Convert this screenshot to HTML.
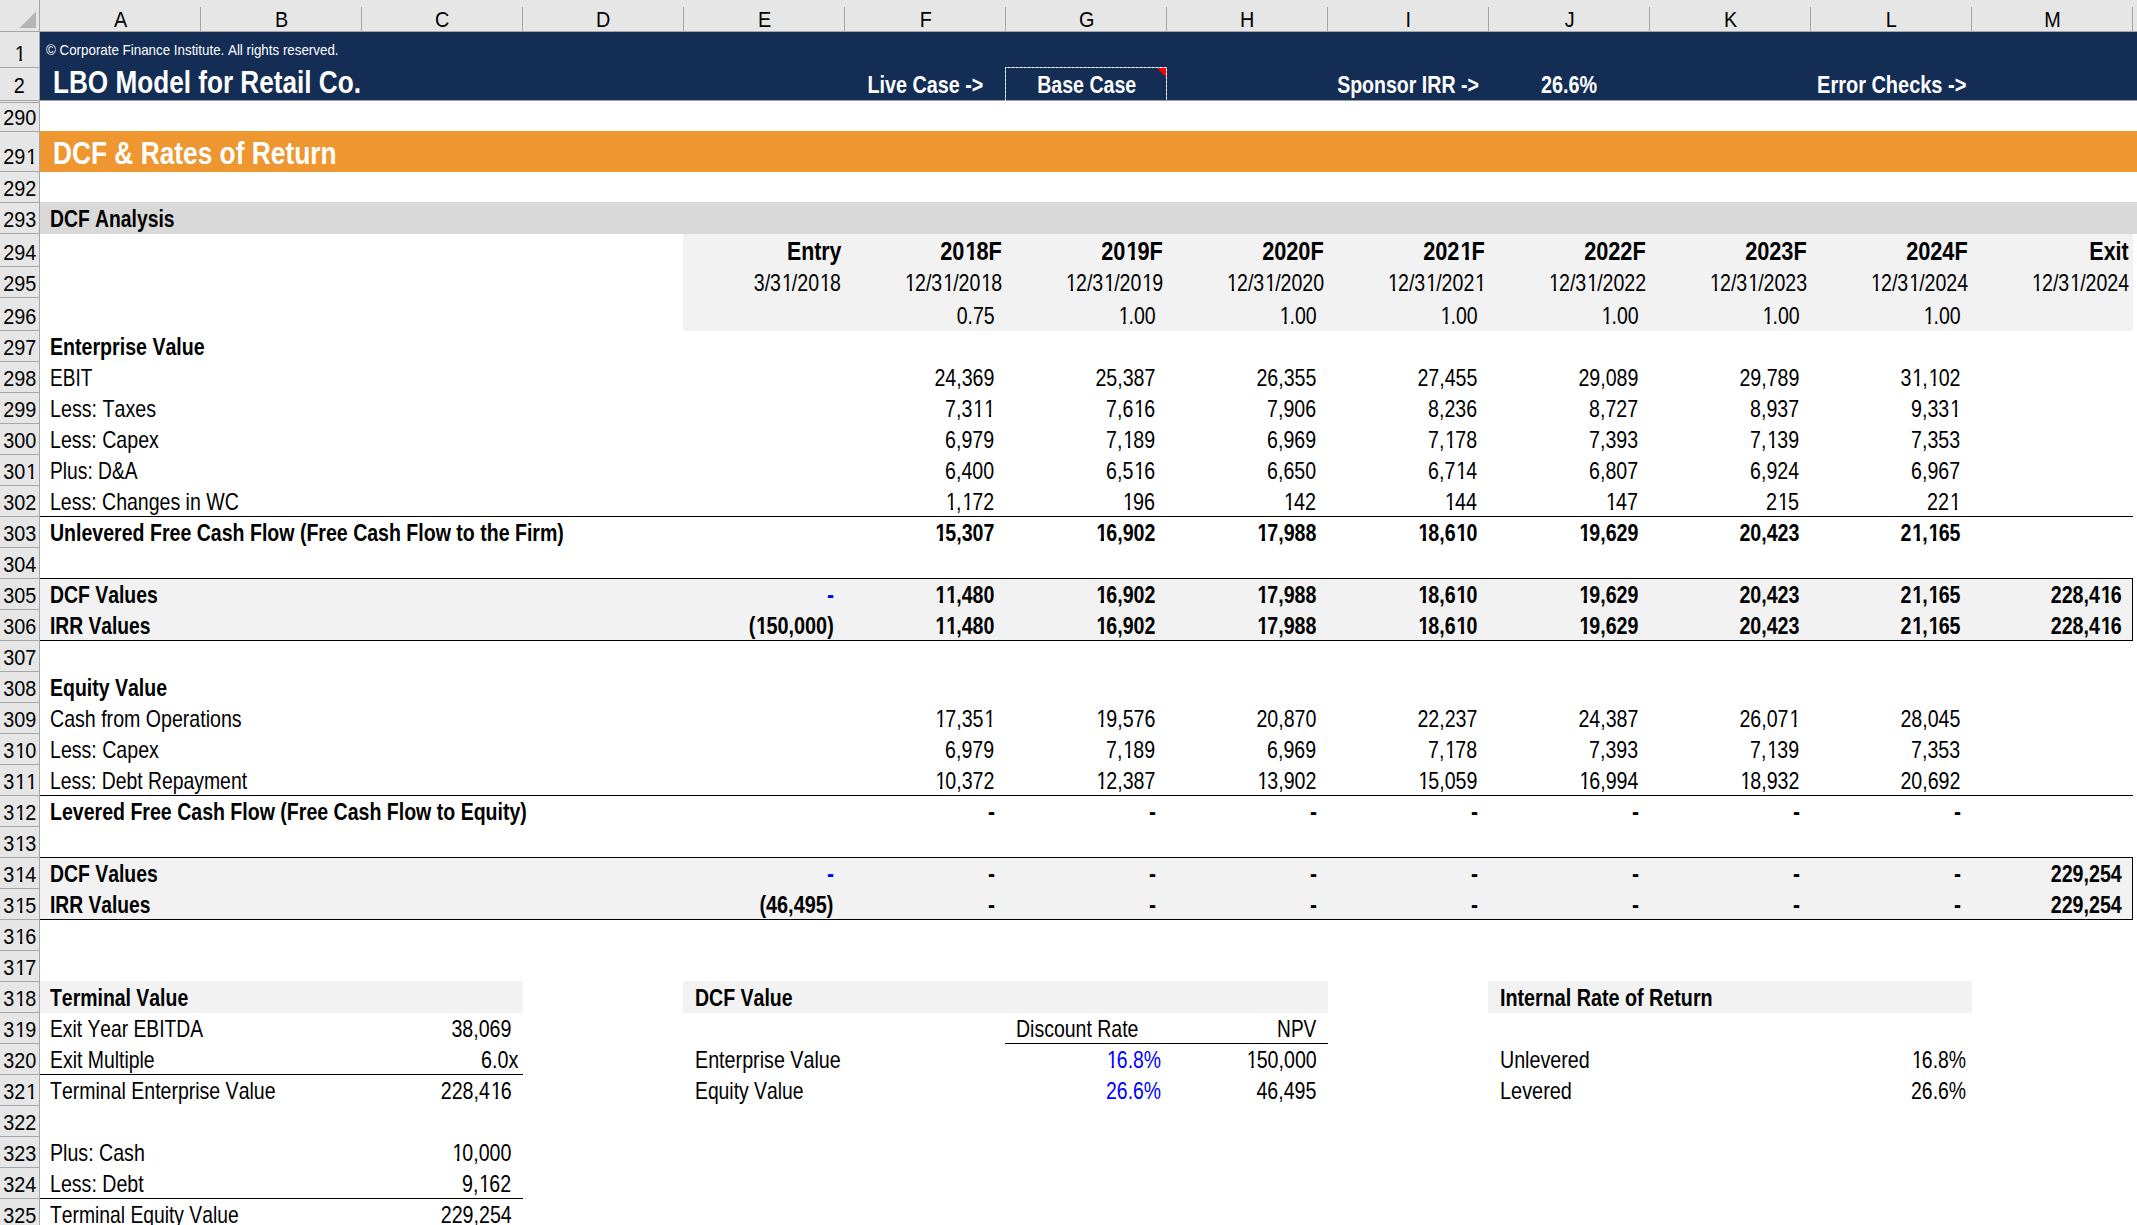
<!DOCTYPE html>
<html><head><meta charset="utf-8"><style>
html,body{margin:0;padding:0;background:#fff;}
body{width:2137px;height:1225px;position:relative;overflow:hidden;font-family:"Liberation Sans",sans-serif;font-kerning:none;font-feature-settings:"kern" 0,"liga" 0;text-rendering:optimizeSpeed;}
.r{position:absolute;}
.t{position:absolute;white-space:nowrap;}
.t span{display:inline-block;}
i{font-style:normal;display:inline-block;position:relative;left:0.05em;}
i.o{clip-path:polygon(0 0,100% 0,100% 0.68em,0.355em 0.68em,0.355em 2em,0.238em 2em,0.238em 0.68em,0 0.68em);}
i.ob{clip-path:polygon(0 0,100% 0,100% 0.65em,0.388em 0.65em,0.388em 2em,0.218em 2em,0.218em 0.65em,0 0.65em);}
</style></head><body>
<div class="r" style="left:40px;top:32px;width:2097px;height:68px;background:#132D55"></div>
<div class="r" style="left:40px;top:100px;width:2097px;height:1px;background:#A0A0A0"></div>
<div class="r" style="left:40px;top:131px;width:2097px;height:41px;background:#EE962F"></div>
<div class="r" style="left:40px;top:202px;width:2097px;height:32px;background:#D9D9D9"></div>
<div class="r" style="left:683px;top:234px;width:1450px;height:97px;background:#F2F2F2"></div>
<div class="r" style="left:40px;top:579px;width:2093px;height:62px;background:#F2F2F2"></div>
<div class="r" style="left:40px;top:858px;width:2093px;height:62px;background:#F2F2F2"></div>
<div class="r" style="left:40px;top:981px;width:483px;height:32px;background:#F2F2F2"></div>
<div class="r" style="left:683px;top:981px;width:645px;height:32px;background:#F2F2F2"></div>
<div class="r" style="left:1488px;top:981px;width:484px;height:32px;background:#F2F2F2"></div>
<div class="r" style="left:40px;top:516px;width:2093px;height:1px;background:#000"></div>
<div class="r" style="left:40px;top:578px;width:2093px;height:1px;background:#000"></div>
<div class="r" style="left:40px;top:640px;width:2093px;height:1px;background:#000"></div>
<div class="r" style="left:2132px;top:578px;width:1px;height:63px;background:#000"></div>
<div class="r" style="left:40px;top:795px;width:2093px;height:1px;background:#000"></div>
<div class="r" style="left:40px;top:857px;width:2093px;height:1px;background:#000"></div>
<div class="r" style="left:40px;top:919px;width:2093px;height:1px;background:#000"></div>
<div class="r" style="left:2132px;top:857px;width:1px;height:63px;background:#000"></div>
<div class="r" style="left:1005px;top:1043px;width:323px;height:1px;background:#000"></div>
<div class="r" style="left:40px;top:1074px;width:483px;height:1px;background:#000"></div>
<div class="r" style="left:40px;top:1198px;width:483px;height:1px;background:#000"></div>
<div class="r" style="left:0px;top:0px;width:2137px;height:31px;background:#E6E6E6"></div>
<div class="r" style="left:0px;top:31px;width:39px;height:1194px;background:#E6E6E6"></div>
<div class="r" style="left:0px;top:31px;width:2137px;height:1px;background:#A6A6A6"></div>
<div class="r" style="left:39px;top:0px;width:1px;height:1225px;background:#A6A6A6"></div>
<svg class="r" style="left:0;top:0" width="40" height="31"><polygon points="36,11.5 36,28 19.5,28" fill="#B4B4B4"/></svg>
<div class="r" style="left:200px;top:7px;width:1px;height:24px;background:#A6A6A6"></div>
<div class="t" style="left:-479.50px;top:8.55px;width:1200px;text-align:center;font-size:22.5px;line-height:22.5px;font-weight:normal;color:#000"><span style="transform:scaleX(0.88);transform-origin:center">A</span></div>
<div class="r" style="left:361px;top:7px;width:1px;height:24px;background:#A6A6A6"></div>
<div class="t" style="left:-318.50px;top:8.55px;width:1200px;text-align:center;font-size:22.5px;line-height:22.5px;font-weight:normal;color:#000"><span style="transform:scaleX(0.88);transform-origin:center">B</span></div>
<div class="r" style="left:522px;top:7px;width:1px;height:24px;background:#A6A6A6"></div>
<div class="t" style="left:-157.50px;top:8.55px;width:1200px;text-align:center;font-size:22.5px;line-height:22.5px;font-weight:normal;color:#000"><span style="transform:scaleX(0.88);transform-origin:center">C</span></div>
<div class="r" style="left:683px;top:7px;width:1px;height:24px;background:#A6A6A6"></div>
<div class="t" style="left:3.50px;top:8.55px;width:1200px;text-align:center;font-size:22.5px;line-height:22.5px;font-weight:normal;color:#000"><span style="transform:scaleX(0.88);transform-origin:center">D</span></div>
<div class="r" style="left:844px;top:7px;width:1px;height:24px;background:#A6A6A6"></div>
<div class="t" style="left:164.50px;top:8.55px;width:1200px;text-align:center;font-size:22.5px;line-height:22.5px;font-weight:normal;color:#000"><span style="transform:scaleX(0.88);transform-origin:center">E</span></div>
<div class="r" style="left:1005px;top:7px;width:1px;height:24px;background:#A6A6A6"></div>
<div class="t" style="left:325.50px;top:8.55px;width:1200px;text-align:center;font-size:22.5px;line-height:22.5px;font-weight:normal;color:#000"><span style="transform:scaleX(0.88);transform-origin:center">F</span></div>
<div class="r" style="left:1166px;top:7px;width:1px;height:24px;background:#A6A6A6"></div>
<div class="t" style="left:486.50px;top:8.55px;width:1200px;text-align:center;font-size:22.5px;line-height:22.5px;font-weight:normal;color:#000"><span style="transform:scaleX(0.88);transform-origin:center">G</span></div>
<div class="r" style="left:1327px;top:7px;width:1px;height:24px;background:#A6A6A6"></div>
<div class="t" style="left:647.50px;top:8.55px;width:1200px;text-align:center;font-size:22.5px;line-height:22.5px;font-weight:normal;color:#000"><span style="transform:scaleX(0.88);transform-origin:center">H</span></div>
<div class="r" style="left:1488px;top:7px;width:1px;height:24px;background:#A6A6A6"></div>
<div class="t" style="left:808.50px;top:8.55px;width:1200px;text-align:center;font-size:22.5px;line-height:22.5px;font-weight:normal;color:#000"><span style="transform:scaleX(0.88);transform-origin:center">I</span></div>
<div class="r" style="left:1649px;top:7px;width:1px;height:24px;background:#A6A6A6"></div>
<div class="t" style="left:969.50px;top:8.55px;width:1200px;text-align:center;font-size:22.5px;line-height:22.5px;font-weight:normal;color:#000"><span style="transform:scaleX(0.88);transform-origin:center">J</span></div>
<div class="r" style="left:1810px;top:7px;width:1px;height:24px;background:#A6A6A6"></div>
<div class="t" style="left:1130.50px;top:8.55px;width:1200px;text-align:center;font-size:22.5px;line-height:22.5px;font-weight:normal;color:#000"><span style="transform:scaleX(0.88);transform-origin:center">K</span></div>
<div class="r" style="left:1971px;top:7px;width:1px;height:24px;background:#A6A6A6"></div>
<div class="t" style="left:1291.50px;top:8.55px;width:1200px;text-align:center;font-size:22.5px;line-height:22.5px;font-weight:normal;color:#000"><span style="transform:scaleX(0.88);transform-origin:center">L</span></div>
<div class="r" style="left:2132px;top:7px;width:1px;height:24px;background:#A6A6A6"></div>
<div class="t" style="left:1452.50px;top:8.55px;width:1200px;text-align:center;font-size:22.5px;line-height:22.5px;font-weight:normal;color:#000"><span style="transform:scaleX(0.88);transform-origin:center">M</span></div>
<div class="r" style="left:0px;top:67px;width:39px;height:1px;background:#A6A6A6"></div>
<div class="t" style="left:-580.70px;top:42.95px;width:1200px;text-align:center;font-size:22.5px;line-height:22.5px;font-weight:normal;color:#000"><span style="transform:scaleX(0.88);transform-origin:center"><i class="o">1</i></span></div>
<div class="r" style="left:0px;top:100px;width:39px;height:1px;background:#A6A6A6"></div>
<div class="t" style="left:-580.70px;top:74.95px;width:1200px;text-align:center;font-size:22.5px;line-height:22.5px;font-weight:normal;color:#000"><span style="transform:scaleX(0.88);transform-origin:center">2</span></div>
<div class="r" style="left:0px;top:131px;width:39px;height:1px;background:#A6A6A6"></div>
<div class="t" style="left:-580.70px;top:106.95px;width:1200px;text-align:center;font-size:22.5px;line-height:22.5px;font-weight:normal;color:#000"><span style="transform:scaleX(0.88);transform-origin:center">290</span></div>
<div class="r" style="left:0px;top:171px;width:39px;height:1px;background:#A6A6A6"></div>
<div class="t" style="left:-580.70px;top:145.95px;width:1200px;text-align:center;font-size:22.5px;line-height:22.5px;font-weight:normal;color:#000"><span style="transform:scaleX(0.88);transform-origin:center">29<i class="o">1</i></span></div>
<div class="r" style="left:0px;top:202px;width:39px;height:1px;background:#A6A6A6"></div>
<div class="t" style="left:-580.70px;top:177.95px;width:1200px;text-align:center;font-size:22.5px;line-height:22.5px;font-weight:normal;color:#000"><span style="transform:scaleX(0.88);transform-origin:center">292</span></div>
<div class="r" style="left:0px;top:233px;width:39px;height:1px;background:#A6A6A6"></div>
<div class="t" style="left:-580.70px;top:208.95px;width:1200px;text-align:center;font-size:22.5px;line-height:22.5px;font-weight:normal;color:#000"><span style="transform:scaleX(0.88);transform-origin:center">293</span></div>
<div class="r" style="left:0px;top:266px;width:39px;height:1px;background:#A6A6A6"></div>
<div class="t" style="left:-580.70px;top:241.95px;width:1200px;text-align:center;font-size:22.5px;line-height:22.5px;font-weight:normal;color:#000"><span style="transform:scaleX(0.88);transform-origin:center">294</span></div>
<div class="r" style="left:0px;top:297px;width:39px;height:1px;background:#A6A6A6"></div>
<div class="t" style="left:-580.70px;top:272.95px;width:1200px;text-align:center;font-size:22.5px;line-height:22.5px;font-weight:normal;color:#000"><span style="transform:scaleX(0.88);transform-origin:center">295</span></div>
<div class="r" style="left:0px;top:330px;width:39px;height:1px;background:#A6A6A6"></div>
<div class="t" style="left:-580.70px;top:305.95px;width:1200px;text-align:center;font-size:22.5px;line-height:22.5px;font-weight:normal;color:#000"><span style="transform:scaleX(0.88);transform-origin:center">296</span></div>
<div class="r" style="left:0px;top:361px;width:39px;height:1px;background:#A6A6A6"></div>
<div class="t" style="left:-580.70px;top:336.95px;width:1200px;text-align:center;font-size:22.5px;line-height:22.5px;font-weight:normal;color:#000"><span style="transform:scaleX(0.88);transform-origin:center">297</span></div>
<div class="r" style="left:0px;top:392px;width:39px;height:1px;background:#A6A6A6"></div>
<div class="t" style="left:-580.70px;top:367.95px;width:1200px;text-align:center;font-size:22.5px;line-height:22.5px;font-weight:normal;color:#000"><span style="transform:scaleX(0.88);transform-origin:center">298</span></div>
<div class="r" style="left:0px;top:423px;width:39px;height:1px;background:#A6A6A6"></div>
<div class="t" style="left:-580.70px;top:398.95px;width:1200px;text-align:center;font-size:22.5px;line-height:22.5px;font-weight:normal;color:#000"><span style="transform:scaleX(0.88);transform-origin:center">299</span></div>
<div class="r" style="left:0px;top:454px;width:39px;height:1px;background:#A6A6A6"></div>
<div class="t" style="left:-580.70px;top:429.95px;width:1200px;text-align:center;font-size:22.5px;line-height:22.5px;font-weight:normal;color:#000"><span style="transform:scaleX(0.88);transform-origin:center">300</span></div>
<div class="r" style="left:0px;top:485px;width:39px;height:1px;background:#A6A6A6"></div>
<div class="t" style="left:-580.70px;top:460.95px;width:1200px;text-align:center;font-size:22.5px;line-height:22.5px;font-weight:normal;color:#000"><span style="transform:scaleX(0.88);transform-origin:center">30<i class="o">1</i></span></div>
<div class="r" style="left:0px;top:516px;width:39px;height:1px;background:#A6A6A6"></div>
<div class="t" style="left:-580.70px;top:491.95px;width:1200px;text-align:center;font-size:22.5px;line-height:22.5px;font-weight:normal;color:#000"><span style="transform:scaleX(0.88);transform-origin:center">302</span></div>
<div class="r" style="left:0px;top:547px;width:39px;height:1px;background:#A6A6A6"></div>
<div class="t" style="left:-580.70px;top:522.95px;width:1200px;text-align:center;font-size:22.5px;line-height:22.5px;font-weight:normal;color:#000"><span style="transform:scaleX(0.88);transform-origin:center">303</span></div>
<div class="r" style="left:0px;top:578px;width:39px;height:1px;background:#A6A6A6"></div>
<div class="t" style="left:-580.70px;top:553.95px;width:1200px;text-align:center;font-size:22.5px;line-height:22.5px;font-weight:normal;color:#000"><span style="transform:scaleX(0.88);transform-origin:center">304</span></div>
<div class="r" style="left:0px;top:609px;width:39px;height:1px;background:#A6A6A6"></div>
<div class="t" style="left:-580.70px;top:584.95px;width:1200px;text-align:center;font-size:22.5px;line-height:22.5px;font-weight:normal;color:#000"><span style="transform:scaleX(0.88);transform-origin:center">305</span></div>
<div class="r" style="left:0px;top:640px;width:39px;height:1px;background:#A6A6A6"></div>
<div class="t" style="left:-580.70px;top:615.95px;width:1200px;text-align:center;font-size:22.5px;line-height:22.5px;font-weight:normal;color:#000"><span style="transform:scaleX(0.88);transform-origin:center">306</span></div>
<div class="r" style="left:0px;top:671px;width:39px;height:1px;background:#A6A6A6"></div>
<div class="t" style="left:-580.70px;top:646.95px;width:1200px;text-align:center;font-size:22.5px;line-height:22.5px;font-weight:normal;color:#000"><span style="transform:scaleX(0.88);transform-origin:center">307</span></div>
<div class="r" style="left:0px;top:702px;width:39px;height:1px;background:#A6A6A6"></div>
<div class="t" style="left:-580.70px;top:677.95px;width:1200px;text-align:center;font-size:22.5px;line-height:22.5px;font-weight:normal;color:#000"><span style="transform:scaleX(0.88);transform-origin:center">308</span></div>
<div class="r" style="left:0px;top:733px;width:39px;height:1px;background:#A6A6A6"></div>
<div class="t" style="left:-580.70px;top:708.95px;width:1200px;text-align:center;font-size:22.5px;line-height:22.5px;font-weight:normal;color:#000"><span style="transform:scaleX(0.88);transform-origin:center">309</span></div>
<div class="r" style="left:0px;top:764px;width:39px;height:1px;background:#A6A6A6"></div>
<div class="t" style="left:-580.70px;top:739.95px;width:1200px;text-align:center;font-size:22.5px;line-height:22.5px;font-weight:normal;color:#000"><span style="transform:scaleX(0.88);transform-origin:center">3<i class="o">1</i>0</span></div>
<div class="r" style="left:0px;top:795px;width:39px;height:1px;background:#A6A6A6"></div>
<div class="t" style="left:-580.70px;top:770.95px;width:1200px;text-align:center;font-size:22.5px;line-height:22.5px;font-weight:normal;color:#000"><span style="transform:scaleX(0.88);transform-origin:center">3<i class="o">1</i><i class="o">1</i></span></div>
<div class="r" style="left:0px;top:826px;width:39px;height:1px;background:#A6A6A6"></div>
<div class="t" style="left:-580.70px;top:801.95px;width:1200px;text-align:center;font-size:22.5px;line-height:22.5px;font-weight:normal;color:#000"><span style="transform:scaleX(0.88);transform-origin:center">3<i class="o">1</i>2</span></div>
<div class="r" style="left:0px;top:857px;width:39px;height:1px;background:#A6A6A6"></div>
<div class="t" style="left:-580.70px;top:832.95px;width:1200px;text-align:center;font-size:22.5px;line-height:22.5px;font-weight:normal;color:#000"><span style="transform:scaleX(0.88);transform-origin:center">3<i class="o">1</i>3</span></div>
<div class="r" style="left:0px;top:888px;width:39px;height:1px;background:#A6A6A6"></div>
<div class="t" style="left:-580.70px;top:863.95px;width:1200px;text-align:center;font-size:22.5px;line-height:22.5px;font-weight:normal;color:#000"><span style="transform:scaleX(0.88);transform-origin:center">3<i class="o">1</i>4</span></div>
<div class="r" style="left:0px;top:919px;width:39px;height:1px;background:#A6A6A6"></div>
<div class="t" style="left:-580.70px;top:894.95px;width:1200px;text-align:center;font-size:22.5px;line-height:22.5px;font-weight:normal;color:#000"><span style="transform:scaleX(0.88);transform-origin:center">3<i class="o">1</i>5</span></div>
<div class="r" style="left:0px;top:950px;width:39px;height:1px;background:#A6A6A6"></div>
<div class="t" style="left:-580.70px;top:925.95px;width:1200px;text-align:center;font-size:22.5px;line-height:22.5px;font-weight:normal;color:#000"><span style="transform:scaleX(0.88);transform-origin:center">3<i class="o">1</i>6</span></div>
<div class="r" style="left:0px;top:981px;width:39px;height:1px;background:#A6A6A6"></div>
<div class="t" style="left:-580.70px;top:956.95px;width:1200px;text-align:center;font-size:22.5px;line-height:22.5px;font-weight:normal;color:#000"><span style="transform:scaleX(0.88);transform-origin:center">3<i class="o">1</i>7</span></div>
<div class="r" style="left:0px;top:1012px;width:39px;height:1px;background:#A6A6A6"></div>
<div class="t" style="left:-580.70px;top:987.95px;width:1200px;text-align:center;font-size:22.5px;line-height:22.5px;font-weight:normal;color:#000"><span style="transform:scaleX(0.88);transform-origin:center">3<i class="o">1</i>8</span></div>
<div class="r" style="left:0px;top:1043px;width:39px;height:1px;background:#A6A6A6"></div>
<div class="t" style="left:-580.70px;top:1018.95px;width:1200px;text-align:center;font-size:22.5px;line-height:22.5px;font-weight:normal;color:#000"><span style="transform:scaleX(0.88);transform-origin:center">3<i class="o">1</i>9</span></div>
<div class="r" style="left:0px;top:1074px;width:39px;height:1px;background:#A6A6A6"></div>
<div class="t" style="left:-580.70px;top:1049.95px;width:1200px;text-align:center;font-size:22.5px;line-height:22.5px;font-weight:normal;color:#000"><span style="transform:scaleX(0.88);transform-origin:center">320</span></div>
<div class="r" style="left:0px;top:1105px;width:39px;height:1px;background:#A6A6A6"></div>
<div class="t" style="left:-580.70px;top:1080.95px;width:1200px;text-align:center;font-size:22.5px;line-height:22.5px;font-weight:normal;color:#000"><span style="transform:scaleX(0.88);transform-origin:center">32<i class="o">1</i></span></div>
<div class="r" style="left:0px;top:1136px;width:39px;height:1px;background:#A6A6A6"></div>
<div class="t" style="left:-580.70px;top:1111.95px;width:1200px;text-align:center;font-size:22.5px;line-height:22.5px;font-weight:normal;color:#000"><span style="transform:scaleX(0.88);transform-origin:center">322</span></div>
<div class="r" style="left:0px;top:1167px;width:39px;height:1px;background:#A6A6A6"></div>
<div class="t" style="left:-580.70px;top:1142.95px;width:1200px;text-align:center;font-size:22.5px;line-height:22.5px;font-weight:normal;color:#000"><span style="transform:scaleX(0.88);transform-origin:center">323</span></div>
<div class="r" style="left:0px;top:1198px;width:39px;height:1px;background:#A6A6A6"></div>
<div class="t" style="left:-580.70px;top:1173.95px;width:1200px;text-align:center;font-size:22.5px;line-height:22.5px;font-weight:normal;color:#000"><span style="transform:scaleX(0.88);transform-origin:center">324</span></div>
<div class="r" style="left:0px;top:1229px;width:39px;height:1px;background:#A6A6A6"></div>
<div class="t" style="left:-580.70px;top:1204.95px;width:1200px;text-align:center;font-size:22.5px;line-height:22.5px;font-weight:normal;color:#000"><span style="transform:scaleX(0.88);transform-origin:center">325</span></div>
<div class="r" style="left:0px;top:102px;width:39px;height:1px;background:#A6A6A6"></div>
<div class="t" style="left:45.50px;top:41.90px;width:1200px;text-align:left;font-size:15px;line-height:15px;font-weight:normal;color:#fff"><span style="transform:scaleX(0.89);transform-origin:left">© Corporate Finance Institute. All rights reserved.</span></div>
<div class="t" style="left:53.00px;top:66.21px;width:1200px;text-align:left;font-size:32px;line-height:32px;font-weight:bold;color:#fff"><span style="transform:scaleX(0.817);transform-origin:left">LBO Model for Retail Co.</span></div>
<div class="t" style="left:325.50px;top:73.18px;width:1200px;text-align:center;font-size:24px;line-height:24px;font-weight:bold;color:#fff"><span style="transform:scaleX(0.8222109132032797);transform-origin:center">Live Case -&gt;</span></div>
<div class="t" style="left:486.50px;top:73.18px;width:1200px;text-align:center;font-size:24px;line-height:24px;font-weight:bold;color:#fff"><span style="transform:scaleX(0.8160199592935461);transform-origin:center">Base Case</span></div>
<div class="t" style="left:808.50px;top:73.18px;width:1200px;text-align:center;font-size:24px;line-height:24px;font-weight:bold;color:#fff"><span style="transform:scaleX(0.8146324879309172);transform-origin:center">Sponsor IRR -&gt;</span></div>
<div class="t" style="left:969.50px;top:73.18px;width:1200px;text-align:center;font-size:24px;line-height:24px;font-weight:bold;color:#fff"><span style="transform:scaleX(0.8244984160506864);transform-origin:center">26.6%</span></div>
<div class="t" style="left:1291.50px;top:73.18px;width:1200px;text-align:center;font-size:24px;line-height:24px;font-weight:bold;color:#fff"><span style="transform:scaleX(0.8318444886238127);transform-origin:center">Error Checks -&gt;</span></div>
<svg class="r" style="left:1004px;top:66px" width="164" height="35"><path d="M1.5,35 V1.5 H162.5 V35" fill="none" stroke="#9AB0D8" stroke-width="1"/><path d="M1.5,35 V1.5 H162.5 V35" fill="none" stroke="#fff" stroke-width="1" stroke-dasharray="2,2"/><polygon points="153,2 162,2 162,11" fill="#FF0000"/></svg>
<div class="t" style="left:53.00px;top:136.91px;width:1200px;text-align:left;font-size:32px;line-height:32px;font-weight:bold;color:#fff"><span style="transform:scaleX(0.822);transform-origin:left">DCF &amp; Rates of Return</span></div>
<div class="t" style="left:50.00px;top:206.98px;width:1200px;text-align:left;font-size:24px;line-height:24px;font-weight:bold;color:#000"><span style="transform:scaleX(0.8046221400508435);transform-origin:left">DCF Analysis</span></div>
<div class="t" style="left:-359.00px;top:237.79px;width:1200px;text-align:right;font-size:26px;line-height:26px;font-weight:bold;color:#000"><span style="transform:scaleX(0.8204463032948601);transform-origin:right">Entry</span></div>
<div class="t" style="left:-198.00px;top:237.79px;width:1200px;text-align:right;font-size:26px;line-height:26px;font-weight:bold;color:#000"><span style="transform:scaleX(0.8355089332244743);transform-origin:right">20<i class="ob">1</i>8F</span></div>
<div class="t" style="left:-37.00px;top:237.79px;width:1200px;text-align:right;font-size:26px;line-height:26px;font-weight:bold;color:#000"><span style="transform:scaleX(0.8355089332244743);transform-origin:right">20<i class="ob">1</i>9F</span></div>
<div class="t" style="left:124.00px;top:237.79px;width:1200px;text-align:right;font-size:26px;line-height:26px;font-weight:bold;color:#000"><span style="transform:scaleX(0.8355089332244743);transform-origin:right">2020F</span></div>
<div class="t" style="left:285.00px;top:237.79px;width:1200px;text-align:right;font-size:26px;line-height:26px;font-weight:bold;color:#000"><span style="transform:scaleX(0.8355089332244743);transform-origin:right">202<i class="ob">1</i>F</span></div>
<div class="t" style="left:446.00px;top:237.79px;width:1200px;text-align:right;font-size:26px;line-height:26px;font-weight:bold;color:#000"><span style="transform:scaleX(0.8355089332244743);transform-origin:right">2022F</span></div>
<div class="t" style="left:607.00px;top:237.79px;width:1200px;text-align:right;font-size:26px;line-height:26px;font-weight:bold;color:#000"><span style="transform:scaleX(0.8355089332244743);transform-origin:right">2023F</span></div>
<div class="t" style="left:768.00px;top:237.79px;width:1200px;text-align:right;font-size:26px;line-height:26px;font-weight:bold;color:#000"><span style="transform:scaleX(0.8355089332244743);transform-origin:right">2024F</span></div>
<div class="t" style="left:929.00px;top:237.79px;width:1200px;text-align:right;font-size:26px;line-height:26px;font-weight:bold;color:#000"><span style="transform:scaleX(0.8258708018390089);transform-origin:right">Exit</span></div>
<div class="t" style="left:-359.00px;top:271.38px;width:1200px;text-align:right;font-size:24px;line-height:24px;font-weight:normal;color:#000"><span style="transform:scaleX(0.814839205356163);transform-origin:right">3/3<i class="o">1</i>/20<i class="o">1</i>8</span></div>
<div class="t" style="left:-198.00px;top:271.38px;width:1200px;text-align:right;font-size:24px;line-height:24px;font-weight:normal;color:#000"><span style="transform:scaleX(0.8158699186991872);transform-origin:right"><i class="o">1</i>2/3<i class="o">1</i>/20<i class="o">1</i>8</span></div>
<div class="t" style="left:-37.00px;top:271.38px;width:1200px;text-align:right;font-size:24px;line-height:24px;font-weight:normal;color:#000"><span style="transform:scaleX(0.8158699186991872);transform-origin:right"><i class="o">1</i>2/3<i class="o">1</i>/20<i class="o">1</i>9</span></div>
<div class="t" style="left:124.00px;top:271.38px;width:1200px;text-align:right;font-size:24px;line-height:24px;font-weight:normal;color:#000"><span style="transform:scaleX(0.8158699186991872);transform-origin:right"><i class="o">1</i>2/3<i class="o">1</i>/2020</span></div>
<div class="t" style="left:285.00px;top:271.38px;width:1200px;text-align:right;font-size:24px;line-height:24px;font-weight:normal;color:#000"><span style="transform:scaleX(0.8158699186991872);transform-origin:right"><i class="o">1</i>2/3<i class="o">1</i>/202<i class="o">1</i></span></div>
<div class="t" style="left:446.00px;top:271.38px;width:1200px;text-align:right;font-size:24px;line-height:24px;font-weight:normal;color:#000"><span style="transform:scaleX(0.8158699186991872);transform-origin:right"><i class="o">1</i>2/3<i class="o">1</i>/2022</span></div>
<div class="t" style="left:607.00px;top:271.38px;width:1200px;text-align:right;font-size:24px;line-height:24px;font-weight:normal;color:#000"><span style="transform:scaleX(0.8158699186991872);transform-origin:right"><i class="o">1</i>2/3<i class="o">1</i>/2023</span></div>
<div class="t" style="left:768.00px;top:271.38px;width:1200px;text-align:right;font-size:24px;line-height:24px;font-weight:normal;color:#000"><span style="transform:scaleX(0.8158699186991872);transform-origin:right"><i class="o">1</i>2/3<i class="o">1</i>/2024</span></div>
<div class="t" style="left:929.00px;top:271.38px;width:1200px;text-align:right;font-size:24px;line-height:24px;font-weight:normal;color:#000"><span style="transform:scaleX(0.8158699186991872);transform-origin:right"><i class="o">1</i>2/3<i class="o">1</i>/2024</span></div>
<div class="t" style="left:-205.50px;top:304.18px;width:1200px;text-align:right;font-size:24px;line-height:24px;font-weight:normal;color:#000"><span style="transform:scaleX(0.8135139655460781);transform-origin:right">0.75</span></div>
<div class="t" style="left:-44.50px;top:304.18px;width:1200px;text-align:right;font-size:24px;line-height:24px;font-weight:normal;color:#000"><span style="transform:scaleX(0.8135139655460781);transform-origin:right"><i class="o">1</i>.00</span></div>
<div class="t" style="left:116.50px;top:304.18px;width:1200px;text-align:right;font-size:24px;line-height:24px;font-weight:normal;color:#000"><span style="transform:scaleX(0.8135139655460781);transform-origin:right"><i class="o">1</i>.00</span></div>
<div class="t" style="left:277.50px;top:304.18px;width:1200px;text-align:right;font-size:24px;line-height:24px;font-weight:normal;color:#000"><span style="transform:scaleX(0.8135139655460781);transform-origin:right"><i class="o">1</i>.00</span></div>
<div class="t" style="left:438.50px;top:304.18px;width:1200px;text-align:right;font-size:24px;line-height:24px;font-weight:normal;color:#000"><span style="transform:scaleX(0.8135139655460781);transform-origin:right"><i class="o">1</i>.00</span></div>
<div class="t" style="left:599.50px;top:304.18px;width:1200px;text-align:right;font-size:24px;line-height:24px;font-weight:normal;color:#000"><span style="transform:scaleX(0.8135139655460781);transform-origin:right"><i class="o">1</i>.00</span></div>
<div class="t" style="left:760.50px;top:304.18px;width:1200px;text-align:right;font-size:24px;line-height:24px;font-weight:normal;color:#000"><span style="transform:scaleX(0.8135139655460781);transform-origin:right"><i class="o">1</i>.00</span></div>
<div class="t" style="left:50.00px;top:335.18px;width:1200px;text-align:left;font-size:24px;line-height:24px;font-weight:bold;color:#000"><span style="transform:scaleX(0.8166457758836803);transform-origin:left">Enterprise Value</span></div>
<div class="t" style="left:50.00px;top:366.18px;width:1200px;text-align:left;font-size:24px;line-height:24px;font-weight:normal;color:#000"><span style="transform:scaleX(0.7929290600261317);transform-origin:left">EBIT</span></div>
<div class="t" style="left:-205.50px;top:366.18px;width:1200px;text-align:right;font-size:24px;line-height:24px;font-weight:normal;color:#000"><span style="transform:scaleX(0.8173690932311624);transform-origin:right">24,369</span></div>
<div class="t" style="left:-44.50px;top:366.18px;width:1200px;text-align:right;font-size:24px;line-height:24px;font-weight:normal;color:#000"><span style="transform:scaleX(0.8173690932311624);transform-origin:right">25,387</span></div>
<div class="t" style="left:116.50px;top:366.18px;width:1200px;text-align:right;font-size:24px;line-height:24px;font-weight:normal;color:#000"><span style="transform:scaleX(0.8173690932311624);transform-origin:right">26,355</span></div>
<div class="t" style="left:277.50px;top:366.18px;width:1200px;text-align:right;font-size:24px;line-height:24px;font-weight:normal;color:#000"><span style="transform:scaleX(0.8173690932311624);transform-origin:right">27,455</span></div>
<div class="t" style="left:438.50px;top:366.18px;width:1200px;text-align:right;font-size:24px;line-height:24px;font-weight:normal;color:#000"><span style="transform:scaleX(0.8173690932311624);transform-origin:right">29,089</span></div>
<div class="t" style="left:599.50px;top:366.18px;width:1200px;text-align:right;font-size:24px;line-height:24px;font-weight:normal;color:#000"><span style="transform:scaleX(0.8173690932311624);transform-origin:right">29,789</span></div>
<div class="t" style="left:760.50px;top:366.18px;width:1200px;text-align:right;font-size:24px;line-height:24px;font-weight:normal;color:#000"><span style="transform:scaleX(0.8173690932311624);transform-origin:right">3<i class="o">1</i>,<i class="o">1</i>02</span></div>
<div class="t" style="left:50.00px;top:397.18px;width:1200px;text-align:left;font-size:24px;line-height:24px;font-weight:normal;color:#000"><span style="transform:scaleX(0.8194338982004506);transform-origin:left">Less: Taxes</span></div>
<div class="t" style="left:-205.50px;top:397.18px;width:1200px;text-align:right;font-size:24px;line-height:24px;font-weight:normal;color:#000"><span style="transform:scaleX(0.8158699186991872);transform-origin:right">7,3<i class="o">1</i><i class="o">1</i></span></div>
<div class="t" style="left:-44.50px;top:397.18px;width:1200px;text-align:right;font-size:24px;line-height:24px;font-weight:normal;color:#000"><span style="transform:scaleX(0.8158699186991872);transform-origin:right">7,6<i class="o">1</i>6</span></div>
<div class="t" style="left:116.50px;top:397.18px;width:1200px;text-align:right;font-size:24px;line-height:24px;font-weight:normal;color:#000"><span style="transform:scaleX(0.8158699186991872);transform-origin:right">7,906</span></div>
<div class="t" style="left:277.50px;top:397.18px;width:1200px;text-align:right;font-size:24px;line-height:24px;font-weight:normal;color:#000"><span style="transform:scaleX(0.8158699186991872);transform-origin:right">8,236</span></div>
<div class="t" style="left:438.50px;top:397.18px;width:1200px;text-align:right;font-size:24px;line-height:24px;font-weight:normal;color:#000"><span style="transform:scaleX(0.8158699186991872);transform-origin:right">8,727</span></div>
<div class="t" style="left:599.50px;top:397.18px;width:1200px;text-align:right;font-size:24px;line-height:24px;font-weight:normal;color:#000"><span style="transform:scaleX(0.8158699186991872);transform-origin:right">8,937</span></div>
<div class="t" style="left:760.50px;top:397.18px;width:1200px;text-align:right;font-size:24px;line-height:24px;font-weight:normal;color:#000"><span style="transform:scaleX(0.8158699186991872);transform-origin:right">9,33<i class="o">1</i></span></div>
<div class="t" style="left:50.00px;top:428.18px;width:1200px;text-align:left;font-size:24px;line-height:24px;font-weight:normal;color:#000"><span style="transform:scaleX(0.815675064022393);transform-origin:left">Less: Capex</span></div>
<div class="t" style="left:-205.50px;top:428.18px;width:1200px;text-align:right;font-size:24px;line-height:24px;font-weight:normal;color:#000"><span style="transform:scaleX(0.8158699186991872);transform-origin:right">6,979</span></div>
<div class="t" style="left:-44.50px;top:428.18px;width:1200px;text-align:right;font-size:24px;line-height:24px;font-weight:normal;color:#000"><span style="transform:scaleX(0.8158699186991872);transform-origin:right">7,<i class="o">1</i>89</span></div>
<div class="t" style="left:116.50px;top:428.18px;width:1200px;text-align:right;font-size:24px;line-height:24px;font-weight:normal;color:#000"><span style="transform:scaleX(0.8158699186991872);transform-origin:right">6,969</span></div>
<div class="t" style="left:277.50px;top:428.18px;width:1200px;text-align:right;font-size:24px;line-height:24px;font-weight:normal;color:#000"><span style="transform:scaleX(0.8158699186991872);transform-origin:right">7,<i class="o">1</i>78</span></div>
<div class="t" style="left:438.50px;top:428.18px;width:1200px;text-align:right;font-size:24px;line-height:24px;font-weight:normal;color:#000"><span style="transform:scaleX(0.8158699186991872);transform-origin:right">7,393</span></div>
<div class="t" style="left:599.50px;top:428.18px;width:1200px;text-align:right;font-size:24px;line-height:24px;font-weight:normal;color:#000"><span style="transform:scaleX(0.8158699186991872);transform-origin:right">7,<i class="o">1</i>39</span></div>
<div class="t" style="left:760.50px;top:428.18px;width:1200px;text-align:right;font-size:24px;line-height:24px;font-weight:normal;color:#000"><span style="transform:scaleX(0.8158699186991872);transform-origin:right">7,353</span></div>
<div class="t" style="left:50.00px;top:459.18px;width:1200px;text-align:left;font-size:24px;line-height:24px;font-weight:normal;color:#000"><span style="transform:scaleX(0.8010770294363788);transform-origin:left">Plus: D&amp;A</span></div>
<div class="t" style="left:-205.50px;top:459.18px;width:1200px;text-align:right;font-size:24px;line-height:24px;font-weight:normal;color:#000"><span style="transform:scaleX(0.8158699186991872);transform-origin:right">6,400</span></div>
<div class="t" style="left:-44.50px;top:459.18px;width:1200px;text-align:right;font-size:24px;line-height:24px;font-weight:normal;color:#000"><span style="transform:scaleX(0.8158699186991872);transform-origin:right">6,5<i class="o">1</i>6</span></div>
<div class="t" style="left:116.50px;top:459.18px;width:1200px;text-align:right;font-size:24px;line-height:24px;font-weight:normal;color:#000"><span style="transform:scaleX(0.8158699186991872);transform-origin:right">6,650</span></div>
<div class="t" style="left:277.50px;top:459.18px;width:1200px;text-align:right;font-size:24px;line-height:24px;font-weight:normal;color:#000"><span style="transform:scaleX(0.8158699186991872);transform-origin:right">6,7<i class="o">1</i>4</span></div>
<div class="t" style="left:438.50px;top:459.18px;width:1200px;text-align:right;font-size:24px;line-height:24px;font-weight:normal;color:#000"><span style="transform:scaleX(0.8158699186991872);transform-origin:right">6,807</span></div>
<div class="t" style="left:599.50px;top:459.18px;width:1200px;text-align:right;font-size:24px;line-height:24px;font-weight:normal;color:#000"><span style="transform:scaleX(0.8158699186991872);transform-origin:right">6,924</span></div>
<div class="t" style="left:760.50px;top:459.18px;width:1200px;text-align:right;font-size:24px;line-height:24px;font-weight:normal;color:#000"><span style="transform:scaleX(0.8158699186991872);transform-origin:right">6,967</span></div>
<div class="t" style="left:50.00px;top:490.18px;width:1200px;text-align:left;font-size:24px;line-height:24px;font-weight:normal;color:#000"><span style="transform:scaleX(0.8131970006816632);transform-origin:left">Less: Changes in WC</span></div>
<div class="t" style="left:-205.50px;top:490.18px;width:1200px;text-align:right;font-size:24px;line-height:24px;font-weight:normal;color:#000"><span style="transform:scaleX(0.8158699186991872);transform-origin:right"><i class="o">1</i>,<i class="o">1</i>72</span></div>
<div class="t" style="left:-44.50px;top:490.18px;width:1200px;text-align:right;font-size:24px;line-height:24px;font-weight:normal;color:#000"><span style="transform:scaleX(0.8241147205150717);transform-origin:right"><i class="o">1</i>96</span></div>
<div class="t" style="left:116.50px;top:490.18px;width:1200px;text-align:right;font-size:24px;line-height:24px;font-weight:normal;color:#000"><span style="transform:scaleX(0.8241147205150717);transform-origin:right"><i class="o">1</i>42</span></div>
<div class="t" style="left:277.50px;top:490.18px;width:1200px;text-align:right;font-size:24px;line-height:24px;font-weight:normal;color:#000"><span style="transform:scaleX(0.8241147205150717);transform-origin:right"><i class="o">1</i>44</span></div>
<div class="t" style="left:438.50px;top:490.18px;width:1200px;text-align:right;font-size:24px;line-height:24px;font-weight:normal;color:#000"><span style="transform:scaleX(0.8241147205150717);transform-origin:right"><i class="o">1</i>47</span></div>
<div class="t" style="left:599.50px;top:490.18px;width:1200px;text-align:right;font-size:24px;line-height:24px;font-weight:normal;color:#000"><span style="transform:scaleX(0.8241147205150717);transform-origin:right">2<i class="o">1</i>5</span></div>
<div class="t" style="left:760.50px;top:490.18px;width:1200px;text-align:right;font-size:24px;line-height:24px;font-weight:normal;color:#000"><span style="transform:scaleX(0.8241147205150717);transform-origin:right">22<i class="o">1</i></span></div>
<div class="t" style="left:50.00px;top:521.18px;width:1200px;text-align:left;font-size:24px;line-height:24px;font-weight:bold;color:#000"><span style="transform:scaleX(0.8146163700359438);transform-origin:left">Unlevered Free Cash Flow (Free Cash Flow to the Firm)</span></div>
<div class="t" style="left:-205.50px;top:521.18px;width:1200px;text-align:right;font-size:24px;line-height:24px;font-weight:bold;color:#000"><span style="transform:scaleX(0.8173690932311624);transform-origin:right"><i class="ob">1</i>5,307</span></div>
<div class="t" style="left:-44.50px;top:521.18px;width:1200px;text-align:right;font-size:24px;line-height:24px;font-weight:bold;color:#000"><span style="transform:scaleX(0.8173690932311624);transform-origin:right"><i class="ob">1</i>6,902</span></div>
<div class="t" style="left:116.50px;top:521.18px;width:1200px;text-align:right;font-size:24px;line-height:24px;font-weight:bold;color:#000"><span style="transform:scaleX(0.8173690932311624);transform-origin:right"><i class="ob">1</i>7,988</span></div>
<div class="t" style="left:277.50px;top:521.18px;width:1200px;text-align:right;font-size:24px;line-height:24px;font-weight:bold;color:#000"><span style="transform:scaleX(0.8173690932311624);transform-origin:right"><i class="ob">1</i>8,6<i class="ob">1</i>0</span></div>
<div class="t" style="left:438.50px;top:521.18px;width:1200px;text-align:right;font-size:24px;line-height:24px;font-weight:bold;color:#000"><span style="transform:scaleX(0.8173690932311624);transform-origin:right"><i class="ob">1</i>9,629</span></div>
<div class="t" style="left:599.50px;top:521.18px;width:1200px;text-align:right;font-size:24px;line-height:24px;font-weight:bold;color:#000"><span style="transform:scaleX(0.8173690932311624);transform-origin:right">20,423</span></div>
<div class="t" style="left:760.50px;top:521.18px;width:1200px;text-align:right;font-size:24px;line-height:24px;font-weight:bold;color:#000"><span style="transform:scaleX(0.8173690932311624);transform-origin:right">2<i class="ob">1</i>,<i class="ob">1</i>65</span></div>
<div class="t" style="left:50.00px;top:583.18px;width:1200px;text-align:left;font-size:24px;line-height:24px;font-weight:bold;color:#000"><span style="transform:scaleX(0.8082198327359618);transform-origin:left">DCF Values</span></div>
<div class="t" style="left:-205.50px;top:583.18px;width:1200px;text-align:right;font-size:24px;line-height:24px;font-weight:bold;color:#000"><span style="transform:scaleX(0.8173690932311624);transform-origin:right"><i class="ob">1</i><i class="ob">1</i>,480</span></div>
<div class="t" style="left:-44.50px;top:583.18px;width:1200px;text-align:right;font-size:24px;line-height:24px;font-weight:bold;color:#000"><span style="transform:scaleX(0.8173690932311624);transform-origin:right"><i class="ob">1</i>6,902</span></div>
<div class="t" style="left:116.50px;top:583.18px;width:1200px;text-align:right;font-size:24px;line-height:24px;font-weight:bold;color:#000"><span style="transform:scaleX(0.8173690932311624);transform-origin:right"><i class="ob">1</i>7,988</span></div>
<div class="t" style="left:277.50px;top:583.18px;width:1200px;text-align:right;font-size:24px;line-height:24px;font-weight:bold;color:#000"><span style="transform:scaleX(0.8173690932311624);transform-origin:right"><i class="ob">1</i>8,6<i class="ob">1</i>0</span></div>
<div class="t" style="left:438.50px;top:583.18px;width:1200px;text-align:right;font-size:24px;line-height:24px;font-weight:bold;color:#000"><span style="transform:scaleX(0.8173690932311624);transform-origin:right"><i class="ob">1</i>9,629</span></div>
<div class="t" style="left:599.50px;top:583.18px;width:1200px;text-align:right;font-size:24px;line-height:24px;font-weight:bold;color:#000"><span style="transform:scaleX(0.8173690932311624);transform-origin:right">20,423</span></div>
<div class="t" style="left:760.50px;top:583.18px;width:1200px;text-align:right;font-size:24px;line-height:24px;font-weight:bold;color:#000"><span style="transform:scaleX(0.8173690932311624);transform-origin:right">2<i class="ob">1</i>,<i class="ob">1</i>65</span></div>
<div class="t" style="left:-366.50px;top:583.18px;width:1200px;text-align:right;font-size:24px;line-height:24px;font-weight:bold;color:#0000FF"><span style="transform:scaleX(0.8758553274682307);transform-origin:right">-</span></div>
<div class="t" style="left:921.50px;top:583.18px;width:1200px;text-align:right;font-size:24px;line-height:24px;font-weight:bold;color:#000"><span style="transform:scaleX(0.8184069521365213);transform-origin:right">228,4<i class="ob">1</i>6</span></div>
<div class="t" style="left:50.00px;top:614.18px;width:1200px;text-align:left;font-size:24px;line-height:24px;font-weight:bold;color:#000"><span style="transform:scaleX(0.80137430807406);transform-origin:left">IRR Values</span></div>
<div class="t" style="left:-205.50px;top:614.18px;width:1200px;text-align:right;font-size:24px;line-height:24px;font-weight:bold;color:#000"><span style="transform:scaleX(0.8173690932311624);transform-origin:right"><i class="ob">1</i><i class="ob">1</i>,480</span></div>
<div class="t" style="left:-44.50px;top:614.18px;width:1200px;text-align:right;font-size:24px;line-height:24px;font-weight:bold;color:#000"><span style="transform:scaleX(0.8173690932311624);transform-origin:right"><i class="ob">1</i>6,902</span></div>
<div class="t" style="left:116.50px;top:614.18px;width:1200px;text-align:right;font-size:24px;line-height:24px;font-weight:bold;color:#000"><span style="transform:scaleX(0.8173690932311624);transform-origin:right"><i class="ob">1</i>7,988</span></div>
<div class="t" style="left:277.50px;top:614.18px;width:1200px;text-align:right;font-size:24px;line-height:24px;font-weight:bold;color:#000"><span style="transform:scaleX(0.8173690932311624);transform-origin:right"><i class="ob">1</i>8,6<i class="ob">1</i>0</span></div>
<div class="t" style="left:438.50px;top:614.18px;width:1200px;text-align:right;font-size:24px;line-height:24px;font-weight:bold;color:#000"><span style="transform:scaleX(0.8173690932311624);transform-origin:right"><i class="ob">1</i>9,629</span></div>
<div class="t" style="left:599.50px;top:614.18px;width:1200px;text-align:right;font-size:24px;line-height:24px;font-weight:bold;color:#000"><span style="transform:scaleX(0.8173690932311624);transform-origin:right">20,423</span></div>
<div class="t" style="left:760.50px;top:614.18px;width:1200px;text-align:right;font-size:24px;line-height:24px;font-weight:bold;color:#000"><span style="transform:scaleX(0.8173690932311624);transform-origin:right">2<i class="ob">1</i>,<i class="ob">1</i>65</span></div>
<div class="t" style="left:-366.50px;top:614.18px;width:1200px;text-align:right;font-size:24px;line-height:24px;font-weight:bold;color:#000"><span style="transform:scaleX(0.8273449678719441);transform-origin:right">(<i class="ob">1</i>50,000)</span></div>
<div class="t" style="left:921.50px;top:614.18px;width:1200px;text-align:right;font-size:24px;line-height:24px;font-weight:bold;color:#000"><span style="transform:scaleX(0.8184069521365213);transform-origin:right">228,4<i class="ob">1</i>6</span></div>
<div class="t" style="left:50.00px;top:676.18px;width:1200px;text-align:left;font-size:24px;line-height:24px;font-weight:bold;color:#000"><span style="transform:scaleX(0.8120931258965023);transform-origin:left">Equity Value</span></div>
<div class="t" style="left:50.00px;top:707.18px;width:1200px;text-align:left;font-size:24px;line-height:24px;font-weight:normal;color:#000"><span style="transform:scaleX(0.8161571392596324);transform-origin:left">Cash from Operations</span></div>
<div class="t" style="left:-205.50px;top:707.18px;width:1200px;text-align:right;font-size:24px;line-height:24px;font-weight:normal;color:#000"><span style="transform:scaleX(0.8173690932311624);transform-origin:right"><i class="o">1</i>7,35<i class="o">1</i></span></div>
<div class="t" style="left:-44.50px;top:707.18px;width:1200px;text-align:right;font-size:24px;line-height:24px;font-weight:normal;color:#000"><span style="transform:scaleX(0.8173690932311624);transform-origin:right"><i class="o">1</i>9,576</span></div>
<div class="t" style="left:116.50px;top:707.18px;width:1200px;text-align:right;font-size:24px;line-height:24px;font-weight:normal;color:#000"><span style="transform:scaleX(0.8173690932311624);transform-origin:right">20,870</span></div>
<div class="t" style="left:277.50px;top:707.18px;width:1200px;text-align:right;font-size:24px;line-height:24px;font-weight:normal;color:#000"><span style="transform:scaleX(0.8173690932311624);transform-origin:right">22,237</span></div>
<div class="t" style="left:438.50px;top:707.18px;width:1200px;text-align:right;font-size:24px;line-height:24px;font-weight:normal;color:#000"><span style="transform:scaleX(0.8173690932311624);transform-origin:right">24,387</span></div>
<div class="t" style="left:599.50px;top:707.18px;width:1200px;text-align:right;font-size:24px;line-height:24px;font-weight:normal;color:#000"><span style="transform:scaleX(0.8173690932311624);transform-origin:right">26,07<i class="o">1</i></span></div>
<div class="t" style="left:760.50px;top:707.18px;width:1200px;text-align:right;font-size:24px;line-height:24px;font-weight:normal;color:#000"><span style="transform:scaleX(0.8173690932311624);transform-origin:right">28,045</span></div>
<div class="t" style="left:50.00px;top:738.18px;width:1200px;text-align:left;font-size:24px;line-height:24px;font-weight:normal;color:#000"><span style="transform:scaleX(0.815675064022393);transform-origin:left">Less: Capex</span></div>
<div class="t" style="left:-205.50px;top:738.18px;width:1200px;text-align:right;font-size:24px;line-height:24px;font-weight:normal;color:#000"><span style="transform:scaleX(0.8158699186991872);transform-origin:right">6,979</span></div>
<div class="t" style="left:-44.50px;top:738.18px;width:1200px;text-align:right;font-size:24px;line-height:24px;font-weight:normal;color:#000"><span style="transform:scaleX(0.8158699186991872);transform-origin:right">7,<i class="o">1</i>89</span></div>
<div class="t" style="left:116.50px;top:738.18px;width:1200px;text-align:right;font-size:24px;line-height:24px;font-weight:normal;color:#000"><span style="transform:scaleX(0.8158699186991872);transform-origin:right">6,969</span></div>
<div class="t" style="left:277.50px;top:738.18px;width:1200px;text-align:right;font-size:24px;line-height:24px;font-weight:normal;color:#000"><span style="transform:scaleX(0.8158699186991872);transform-origin:right">7,<i class="o">1</i>78</span></div>
<div class="t" style="left:438.50px;top:738.18px;width:1200px;text-align:right;font-size:24px;line-height:24px;font-weight:normal;color:#000"><span style="transform:scaleX(0.8158699186991872);transform-origin:right">7,393</span></div>
<div class="t" style="left:599.50px;top:738.18px;width:1200px;text-align:right;font-size:24px;line-height:24px;font-weight:normal;color:#000"><span style="transform:scaleX(0.8158699186991872);transform-origin:right">7,<i class="o">1</i>39</span></div>
<div class="t" style="left:760.50px;top:738.18px;width:1200px;text-align:right;font-size:24px;line-height:24px;font-weight:normal;color:#000"><span style="transform:scaleX(0.8158699186991872);transform-origin:right">7,353</span></div>
<div class="t" style="left:50.00px;top:769.18px;width:1200px;text-align:left;font-size:24px;line-height:24px;font-weight:normal;color:#000"><span style="transform:scaleX(0.8070899317158217);transform-origin:left">Less: Debt Repayment</span></div>
<div class="t" style="left:-205.50px;top:769.18px;width:1200px;text-align:right;font-size:24px;line-height:24px;font-weight:normal;color:#000"><span style="transform:scaleX(0.8173690932311624);transform-origin:right"><i class="o">1</i>0,372</span></div>
<div class="t" style="left:-44.50px;top:769.18px;width:1200px;text-align:right;font-size:24px;line-height:24px;font-weight:normal;color:#000"><span style="transform:scaleX(0.8173690932311624);transform-origin:right"><i class="o">1</i>2,387</span></div>
<div class="t" style="left:116.50px;top:769.18px;width:1200px;text-align:right;font-size:24px;line-height:24px;font-weight:normal;color:#000"><span style="transform:scaleX(0.8173690932311624);transform-origin:right"><i class="o">1</i>3,902</span></div>
<div class="t" style="left:277.50px;top:769.18px;width:1200px;text-align:right;font-size:24px;line-height:24px;font-weight:normal;color:#000"><span style="transform:scaleX(0.8173690932311624);transform-origin:right"><i class="o">1</i>5,059</span></div>
<div class="t" style="left:438.50px;top:769.18px;width:1200px;text-align:right;font-size:24px;line-height:24px;font-weight:normal;color:#000"><span style="transform:scaleX(0.8173690932311624);transform-origin:right"><i class="o">1</i>6,994</span></div>
<div class="t" style="left:599.50px;top:769.18px;width:1200px;text-align:right;font-size:24px;line-height:24px;font-weight:normal;color:#000"><span style="transform:scaleX(0.8173690932311624);transform-origin:right"><i class="o">1</i>8,932</span></div>
<div class="t" style="left:760.50px;top:769.18px;width:1200px;text-align:right;font-size:24px;line-height:24px;font-weight:normal;color:#000"><span style="transform:scaleX(0.8173690932311624);transform-origin:right">20,692</span></div>
<div class="t" style="left:50.00px;top:800.18px;width:1200px;text-align:left;font-size:24px;line-height:24px;font-weight:bold;color:#000"><span style="transform:scaleX(0.8145618375269011);transform-origin:left">Levered Free Cash Flow (Free Cash Flow to Equity)</span></div>
<div class="t" style="left:-205.50px;top:800.18px;width:1200px;text-align:right;font-size:24px;line-height:24px;font-weight:bold;color:#000"><span style="transform:scaleX(0.8758553274682307);transform-origin:right">-</span></div>
<div class="t" style="left:-44.50px;top:800.18px;width:1200px;text-align:right;font-size:24px;line-height:24px;font-weight:bold;color:#000"><span style="transform:scaleX(0.8758553274682307);transform-origin:right">-</span></div>
<div class="t" style="left:116.50px;top:800.18px;width:1200px;text-align:right;font-size:24px;line-height:24px;font-weight:bold;color:#000"><span style="transform:scaleX(0.8758553274682307);transform-origin:right">-</span></div>
<div class="t" style="left:277.50px;top:800.18px;width:1200px;text-align:right;font-size:24px;line-height:24px;font-weight:bold;color:#000"><span style="transform:scaleX(0.8758553274682307);transform-origin:right">-</span></div>
<div class="t" style="left:438.50px;top:800.18px;width:1200px;text-align:right;font-size:24px;line-height:24px;font-weight:bold;color:#000"><span style="transform:scaleX(0.8758553274682307);transform-origin:right">-</span></div>
<div class="t" style="left:599.50px;top:800.18px;width:1200px;text-align:right;font-size:24px;line-height:24px;font-weight:bold;color:#000"><span style="transform:scaleX(0.8758553274682307);transform-origin:right">-</span></div>
<div class="t" style="left:760.50px;top:800.18px;width:1200px;text-align:right;font-size:24px;line-height:24px;font-weight:bold;color:#000"><span style="transform:scaleX(0.8758553274682307);transform-origin:right">-</span></div>
<div class="t" style="left:50.00px;top:862.18px;width:1200px;text-align:left;font-size:24px;line-height:24px;font-weight:bold;color:#000"><span style="transform:scaleX(0.8082198327359618);transform-origin:left">DCF Values</span></div>
<div class="t" style="left:-205.50px;top:862.18px;width:1200px;text-align:right;font-size:24px;line-height:24px;font-weight:bold;color:#000"><span style="transform:scaleX(0.8758553274682307);transform-origin:right">-</span></div>
<div class="t" style="left:-44.50px;top:862.18px;width:1200px;text-align:right;font-size:24px;line-height:24px;font-weight:bold;color:#000"><span style="transform:scaleX(0.8758553274682307);transform-origin:right">-</span></div>
<div class="t" style="left:116.50px;top:862.18px;width:1200px;text-align:right;font-size:24px;line-height:24px;font-weight:bold;color:#000"><span style="transform:scaleX(0.8758553274682307);transform-origin:right">-</span></div>
<div class="t" style="left:277.50px;top:862.18px;width:1200px;text-align:right;font-size:24px;line-height:24px;font-weight:bold;color:#000"><span style="transform:scaleX(0.8758553274682307);transform-origin:right">-</span></div>
<div class="t" style="left:438.50px;top:862.18px;width:1200px;text-align:right;font-size:24px;line-height:24px;font-weight:bold;color:#000"><span style="transform:scaleX(0.8758553274682307);transform-origin:right">-</span></div>
<div class="t" style="left:599.50px;top:862.18px;width:1200px;text-align:right;font-size:24px;line-height:24px;font-weight:bold;color:#000"><span style="transform:scaleX(0.8758553274682307);transform-origin:right">-</span></div>
<div class="t" style="left:760.50px;top:862.18px;width:1200px;text-align:right;font-size:24px;line-height:24px;font-weight:bold;color:#000"><span style="transform:scaleX(0.8758553274682307);transform-origin:right">-</span></div>
<div class="t" style="left:-366.50px;top:862.18px;width:1200px;text-align:right;font-size:24px;line-height:24px;font-weight:bold;color:#0000FF"><span style="transform:scaleX(0.8758553274682307);transform-origin:right">-</span></div>
<div class="t" style="left:921.50px;top:862.18px;width:1200px;text-align:right;font-size:24px;line-height:24px;font-weight:bold;color:#000"><span style="transform:scaleX(0.8184069521365213);transform-origin:right">229,254</span></div>
<div class="t" style="left:50.00px;top:893.18px;width:1200px;text-align:left;font-size:24px;line-height:24px;font-weight:bold;color:#000"><span style="transform:scaleX(0.80137430807406);transform-origin:left">IRR Values</span></div>
<div class="t" style="left:-205.50px;top:893.18px;width:1200px;text-align:right;font-size:24px;line-height:24px;font-weight:bold;color:#000"><span style="transform:scaleX(0.8758553274682307);transform-origin:right">-</span></div>
<div class="t" style="left:-44.50px;top:893.18px;width:1200px;text-align:right;font-size:24px;line-height:24px;font-weight:bold;color:#000"><span style="transform:scaleX(0.8758553274682307);transform-origin:right">-</span></div>
<div class="t" style="left:116.50px;top:893.18px;width:1200px;text-align:right;font-size:24px;line-height:24px;font-weight:bold;color:#000"><span style="transform:scaleX(0.8758553274682307);transform-origin:right">-</span></div>
<div class="t" style="left:277.50px;top:893.18px;width:1200px;text-align:right;font-size:24px;line-height:24px;font-weight:bold;color:#000"><span style="transform:scaleX(0.8758553274682307);transform-origin:right">-</span></div>
<div class="t" style="left:438.50px;top:893.18px;width:1200px;text-align:right;font-size:24px;line-height:24px;font-weight:bold;color:#000"><span style="transform:scaleX(0.8758553274682307);transform-origin:right">-</span></div>
<div class="t" style="left:599.50px;top:893.18px;width:1200px;text-align:right;font-size:24px;line-height:24px;font-weight:bold;color:#000"><span style="transform:scaleX(0.8758553274682307);transform-origin:right">-</span></div>
<div class="t" style="left:760.50px;top:893.18px;width:1200px;text-align:right;font-size:24px;line-height:24px;font-weight:bold;color:#000"><span style="transform:scaleX(0.8758553274682307);transform-origin:right">-</span></div>
<div class="t" style="left:-366.50px;top:893.18px;width:1200px;text-align:right;font-size:24px;line-height:24px;font-weight:bold;color:#000"><span style="transform:scaleX(0.8278273029190701);transform-origin:right">(46,495)</span></div>
<div class="t" style="left:921.50px;top:893.18px;width:1200px;text-align:right;font-size:24px;line-height:24px;font-weight:bold;color:#000"><span style="transform:scaleX(0.8184069521365213);transform-origin:right">229,254</span></div>
<div class="t" style="left:50.00px;top:986.18px;width:1200px;text-align:left;font-size:24px;line-height:24px;font-weight:bold;color:#000"><span style="transform:scaleX(0.8093580178686562);transform-origin:left">Terminal Value</span></div>
<div class="t" style="left:694.50px;top:986.18px;width:1200px;text-align:left;font-size:24px;line-height:24px;font-weight:bold;color:#000"><span style="transform:scaleX(0.8129413718651387);transform-origin:left">DCF Value</span></div>
<div class="t" style="left:1499.50px;top:986.18px;width:1200px;text-align:left;font-size:24px;line-height:24px;font-weight:bold;color:#000"><span style="transform:scaleX(0.8219950178044717);transform-origin:left">Internal Rate of Return</span></div>
<div class="t" style="left:50.00px;top:1017.18px;width:1200px;text-align:left;font-size:24px;line-height:24px;font-weight:normal;color:#000"><span style="transform:scaleX(0.8023018485168395);transform-origin:left">Exit Year EBITDA</span></div>
<div class="t" style="left:-688.50px;top:1017.18px;width:1200px;text-align:right;font-size:24px;line-height:24px;font-weight:normal;color:#000"><span style="transform:scaleX(0.8173690932311624);transform-origin:right">38,069</span></div>
<div class="t" style="left:50.00px;top:1079.18px;width:1200px;text-align:left;font-size:24px;line-height:24px;font-weight:normal;color:#000"><span style="transform:scaleX(0.8127674639251172);transform-origin:left">Terminal Enterprise Value</span></div>
<div class="t" style="left:-688.50px;top:1079.18px;width:1200px;text-align:right;font-size:24px;line-height:24px;font-weight:normal;color:#000"><span style="transform:scaleX(0.8184069521365213);transform-origin:right">228,4<i class="o">1</i>6</span></div>
<div class="t" style="left:50.00px;top:1141.18px;width:1200px;text-align:left;font-size:24px;line-height:24px;font-weight:normal;color:#000"><span style="transform:scaleX(0.8167187391515657);transform-origin:left">Plus: Cash</span></div>
<div class="t" style="left:-688.50px;top:1141.18px;width:1200px;text-align:right;font-size:24px;line-height:24px;font-weight:normal;color:#000"><span style="transform:scaleX(0.8173690932311624);transform-origin:right"><i class="o">1</i>0,000</span></div>
<div class="t" style="left:50.00px;top:1172.18px;width:1200px;text-align:left;font-size:24px;line-height:24px;font-weight:normal;color:#000"><span style="transform:scaleX(0.8162936747510496);transform-origin:left">Less: Debt</span></div>
<div class="t" style="left:-688.50px;top:1172.18px;width:1200px;text-align:right;font-size:24px;line-height:24px;font-weight:normal;color:#000"><span style="transform:scaleX(0.8158699186991872);transform-origin:right">9,<i class="o">1</i>62</span></div>
<div class="t" style="left:50.00px;top:1203.18px;width:1200px;text-align:left;font-size:24px;line-height:24px;font-weight:normal;color:#000"><span style="transform:scaleX(0.8037124524635205);transform-origin:left">Terminal Equity Value</span></div>
<div class="t" style="left:-688.50px;top:1203.18px;width:1200px;text-align:right;font-size:24px;line-height:24px;font-weight:normal;color:#000"><span style="transform:scaleX(0.8184069521365213);transform-origin:right">229,254</span></div>
<div class="t" style="left:50.00px;top:1048.18px;width:1200px;text-align:left;font-size:24px;line-height:24px;font-weight:normal;color:#000"><span style="transform:scaleX(0.8089292891815849);transform-origin:left">Exit Multiple</span></div>
<div class="t" style="left:-682.00px;top:1048.18px;width:1200px;text-align:right;font-size:24px;line-height:24px;font-weight:normal;color:#000"><span style="transform:scaleX(0.8235950879271128);transform-origin:right">6.0x</span></div>
<div class="t" style="left:1016.00px;top:1017.18px;width:1200px;text-align:left;font-size:24px;line-height:24px;font-weight:normal;color:#000"><span style="transform:scaleX(0.8124404950809266);transform-origin:left">Discount Rate</span></div>
<div class="t" style="left:116.50px;top:1017.18px;width:1200px;text-align:right;font-size:24px;line-height:24px;font-weight:normal;color:#000"><span style="transform:scaleX(0.795372665675095);transform-origin:right">NPV</span></div>
<div class="t" style="left:694.50px;top:1048.18px;width:1200px;text-align:left;font-size:24px;line-height:24px;font-weight:normal;color:#000"><span style="transform:scaleX(0.8216816736101779);transform-origin:left">Enterprise Value</span></div>
<div class="t" style="left:-38.50px;top:1048.18px;width:1200px;text-align:right;font-size:24px;line-height:24px;font-weight:normal;color:#0000FF"><span style="transform:scaleX(0.8082199644107687);transform-origin:right"><i class="o">1</i>6.8%</span></div>
<div class="t" style="left:116.50px;top:1048.18px;width:1200px;text-align:right;font-size:24px;line-height:24px;font-weight:normal;color:#000"><span style="transform:scaleX(0.8184069521365213);transform-origin:right"><i class="o">1</i>50,000</span></div>
<div class="t" style="left:694.50px;top:1079.18px;width:1200px;text-align:left;font-size:24px;line-height:24px;font-weight:normal;color:#000"><span style="transform:scaleX(0.8047449584816133);transform-origin:left">Equity Value</span></div>
<div class="t" style="left:-38.50px;top:1079.18px;width:1200px;text-align:right;font-size:24px;line-height:24px;font-weight:normal;color:#0000FF"><span style="transform:scaleX(0.8082199644107687);transform-origin:right">26.6%</span></div>
<div class="t" style="left:116.50px;top:1079.18px;width:1200px;text-align:right;font-size:24px;line-height:24px;font-weight:normal;color:#000"><span style="transform:scaleX(0.8173690932311624);transform-origin:right">46,495</span></div>
<div class="t" style="left:1499.50px;top:1048.18px;width:1200px;text-align:left;font-size:24px;line-height:24px;font-weight:normal;color:#000"><span style="transform:scaleX(0.8188981020821818);transform-origin:left">Unlevered</span></div>
<div class="t" style="left:766.50px;top:1048.18px;width:1200px;text-align:right;font-size:24px;line-height:24px;font-weight:normal;color:#000"><span style="transform:scaleX(0.8082199644107687);transform-origin:right"><i class="o">1</i>6.8%</span></div>
<div class="t" style="left:1499.50px;top:1079.18px;width:1200px;text-align:left;font-size:24px;line-height:24px;font-weight:normal;color:#000"><span style="transform:scaleX(0.8291789888748063);transform-origin:left">Levered</span></div>
<div class="t" style="left:766.50px;top:1079.18px;width:1200px;text-align:right;font-size:24px;line-height:24px;font-weight:normal;color:#000"><span style="transform:scaleX(0.8082199644107687);transform-origin:right">26.6%</span></div>
</body></html>
